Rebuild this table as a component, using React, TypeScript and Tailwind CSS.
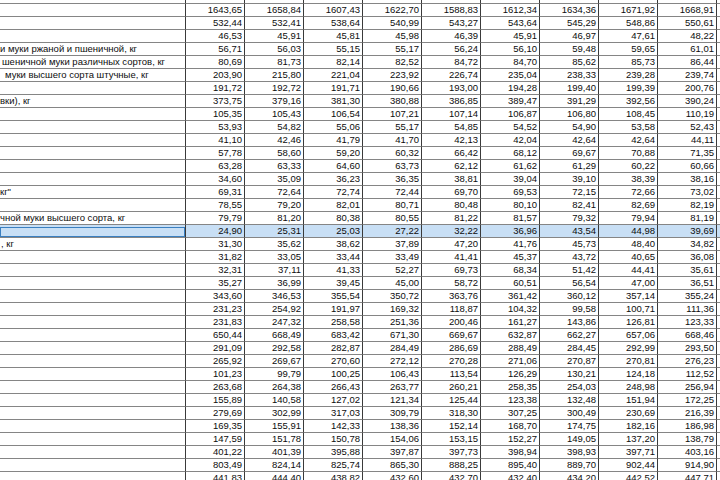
import React from "react";

type Row = { label?: string; indent?: number; values: string[]; hl?: boolean };

const rows: Row[] = [
  { values: ["", "", "", "", "", "", "", "", ""] },
  { values: ["1643,65", "1658,84", "1607,43", "1622,70", "1588,83", "1612,34", "1634,36", "1671,92", "1668,91"] },
  { values: ["532,44", "532,41", "538,64", "540,99", "543,27", "543,64", "545,29", "548,86", "550,61"] },
  { values: ["46,53", "45,91", "45,81", "45,98", "46,39", "45,91", "46,97", "47,61", "48,22"] },
  { label: "и муки ржаной и пшеничной, кг", indent: 0, values: ["56,71", "56,03", "55,15", "55,17", "56,24", "56,10", "59,48", "59,65", "61,01"] },
  { label: "шеничной муки различных сортов, кг", indent: 2, values: ["80,69", "81,73", "82,14", "82,52", "84,72", "84,70", "85,62", "85,73", "86,44"] },
  { label: "муки высшего сорта штучные, кг", indent: 5, values: ["203,90", "215,80", "221,04", "223,92", "226,74", "235,04", "238,33", "239,28", "239,74"] },
  { values: ["191,72", "192,72", "191,71", "190,66", "193,00", "194,28", "199,40", "199,39", "200,76"] },
  { label: "вки), кг", indent: 0, values: ["373,75", "379,16", "381,30", "380,88", "386,85", "389,47", "391,29", "392,56", "390,24"] },
  { values: ["105,35", "105,43", "106,54", "107,21", "107,14", "106,87", "106,80", "108,45", "110,19"] },
  { values: ["53,93", "54,82", "55,06", "55,17", "54,85", "54,52", "54,90", "53,58", "52,43"] },
  { values: ["41,10", "42,46", "41,79", "41,70", "42,13", "42,04", "42,64", "42,64", "44,11"] },
  { values: ["57,78", "58,60", "59,20", "60,32", "66,42", "68,12", "69,67", "70,88", "71,35"] },
  { values: ["63,28", "63,33", "64,60", "63,73", "62,12", "61,62", "61,29", "60,22", "60,66"] },
  { values: ["34,60", "35,09", "36,23", "36,35", "38,81", "39,04", "39,10", "38,39", "38,16"] },
  { label: "кг\"", indent: 0, values: ["69,31", "72,64", "72,74", "72,44", "69,70", "69,53", "72,15", "72,66", "73,02"] },
  { values: ["78,55", "79,20", "82,01", "80,71", "80,48", "80,10", "82,41", "82,69", "82,19"] },
  { label: "чной муки высшего сорта, кг", indent: 0, values: ["79,79", "81,20", "80,38", "80,55", "81,22", "81,57", "79,32", "79,94", "81,19"] },
  { hl: true, values: ["24,90", "25,31", "25,03", "27,22", "32,22", "36,96", "43,54", "44,98", "39,69"] },
  { label: ", кг", indent: 1, values: ["31,30", "35,62", "38,62", "37,89", "47,20", "41,76", "45,73", "48,40", "34,82"] },
  { values: ["31,82", "33,05", "33,44", "33,49", "41,41", "45,37", "43,72", "40,65", "36,08"] },
  { values: ["32,31", "37,11", "41,33", "52,27", "69,73", "68,34", "51,42", "44,41", "35,61"] },
  { values: ["35,27", "36,99", "39,45", "45,00", "58,72", "60,51", "56,54", "47,00", "36,51"] },
  { values: ["343,60", "346,53", "355,54", "350,72", "363,76", "361,42", "360,12", "357,14", "355,24"] },
  { values: ["231,23", "254,92", "191,97", "169,32", "118,87", "104,32", "99,58", "100,71", "111,36"] },
  { values: ["231,83", "247,32", "258,58", "251,36", "200,46", "161,27", "143,86", "126,81", "123,33"] },
  { values: ["650,44", "668,49", "683,42", "671,30", "669,67", "632,87", "662,27", "657,06", "668,46"] },
  { values: ["291,09", "292,58", "282,87", "284,49", "286,69", "288,49", "284,45", "292,99", "293,50"] },
  { values: ["265,92", "269,67", "270,60", "272,12", "270,28", "271,06", "270,87", "270,81", "276,23"] },
  { values: ["101,23", "99,79", "100,25", "106,43", "113,54", "126,29", "130,21", "124,18", "112,52"] },
  { values: ["263,68", "264,38", "266,43", "263,77", "260,21", "258,35", "254,03", "248,98", "256,94"] },
  { values: ["155,89", "140,58", "127,02", "121,34", "125,44", "123,38", "132,48", "151,94", "172,25"] },
  { values: ["279,69", "302,99", "317,03", "309,79", "318,30", "307,25", "300,49", "230,69", "216,39"] },
  { values: ["169,35", "155,91", "142,33", "138,36", "152,14", "168,70", "174,75", "182,16", "186,98"] },
  { values: ["147,59", "151,78", "150,78", "154,06", "153,15", "152,27", "149,05", "137,20", "138,79"] },
  { values: ["401,22", "401,39", "395,88", "397,87", "397,73", "398,94", "398,93", "397,71", "403,16"] },
  { values: ["803,49", "824,14", "825,74", "865,30", "888,25", "895,40", "889,70", "902,44", "914,90"] },
  { values: ["441,83", "444,40", "438,82", "432,60", "432,70", "432,40", "434,20", "442,52", "447,71"] },
];

export default function App() {
  return (
    <div className="w-[720px] h-[480px] overflow-hidden bg-white text-[#0d0d0d] font-['Liberation_Sans',Arial,sans-serif] text-[9.5px]">
      <div className="-mt-[9px]">
        {rows.map((row, i) => (
          <div key={i} className={`flex h-[13px] ${row.hl ? "bg-[#c8dff5]" : ""}`}>
            {/* label column, cut off on the left */}
            <div
              className="relative w-[186px] shrink-0 flex items-center overflow-hidden whitespace-nowrap border-b border-b-[#858585] border-r border-r-[#3a3a3a]"
              style={{ paddingLeft: row.indent ?? 0 }}
            >
              {row.label}
              {row.hl && (
                <div className="absolute left-0 right-0 top-[2px] bottom-0 border border-[#3a7fc0]" />
              )}
            </div>
            {row.values.map((v, j) => (
              <div
                key={j}
                className="w-[59px] shrink-0 flex items-center justify-end pr-[2px] border-b border-b-[#858585] border-r border-r-[#3a3a3a]"
              >
                {v}
              </div>
            ))}
            <div className="flex-1 border-b border-b-[#858585]" />
          </div>
        ))}
      </div>
    </div>
  );
}
